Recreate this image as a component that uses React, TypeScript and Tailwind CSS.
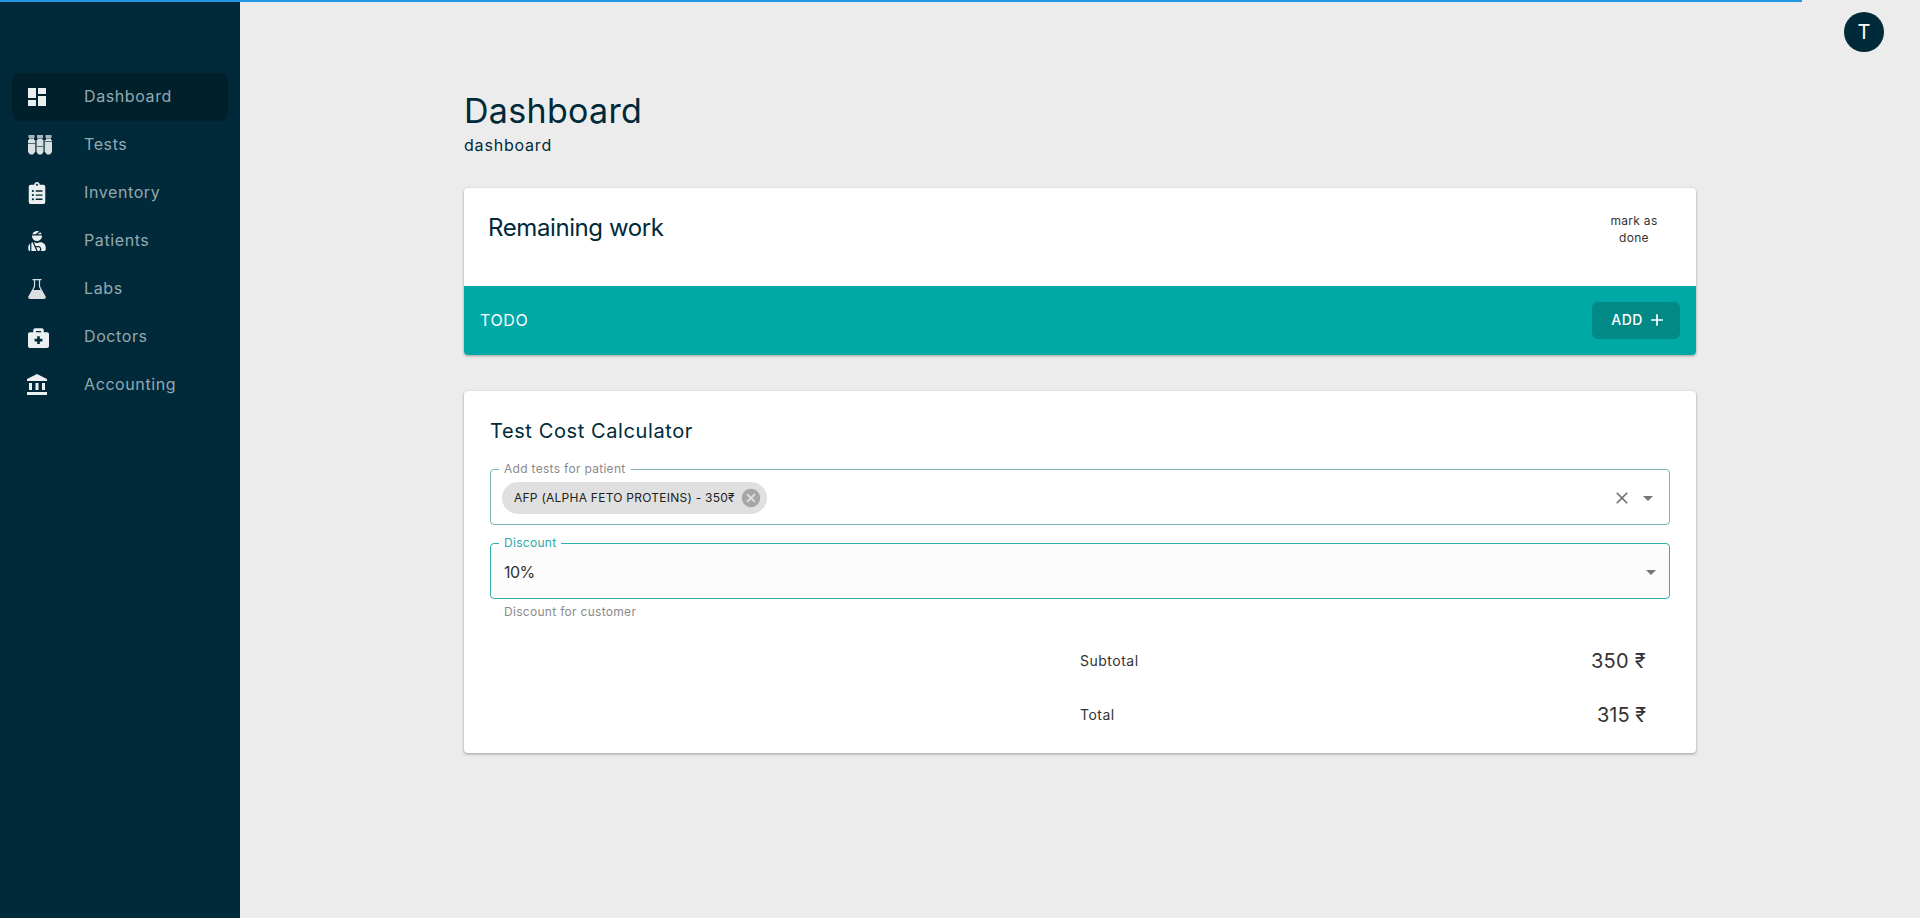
import { MdDashboard, MdAccountBalance, MdClose, MdAdd, MdCancel, MdArrowDropDown } from 'react-icons/md';
import { FaClipboardList, FaUserInjured, FaBriefcaseMedical } from 'react-icons/fa';

// no package has these two quite right
function TubesIcon() {
  return (
    <svg width="24" height="20" viewBox="0 0 24 20" fill="#d9dfe1">
      {[0, 8.5, 17].map((x, i) => (
        <g key={x} transform={`translate(${x} 0)`}>
          <rect x="0.5" y="0" width="6" height="3" fill="#a9b6bb" />
          <path d="M1 3.5h5v1.5h1v12l-2 2.5h-3l-2-2.5v-12h1z" />
          <rect x="0" y={[8, 11, 6][i]} width="7" height="1" fill="#4d6a75" />
        </g>
      ))}
      <rect x="7.2" y="5" width="1.2" height="12" fill="#4d6a75" />
      <rect x="15.7" y="5" width="1.2" height="12" fill="#4d6a75" />
    </svg>
  );
}

function FlaskIcon() {
  return (
    <svg width="18" height="20" viewBox="0 0 18 20">
      <path d="M4.5 0.7h9M6.5 1v6.5L1.2 17.5M11.5 1v6.5l5.3 10" fill="none" stroke="#d9dfe1" strokeWidth="1.2" />
      <path d="M4.6 11h8.8l4.2 6.6c.5 1.1-.2 2.4-1.5 2.4H1.900c-1.300 0-2-1.300-1.500-2.400z" fill="#d9dfe1" />
    </svg>
  );
}

const navItems = [
  { label: 'Dashboard', icon: <MdDashboard size={24} />, active: true },
  { label: 'Tests', icon: <span className="ml-[3px]"><TubesIcon /></span> },
  { label: 'Inventory', icon: <span className="ml-[1px]"><FaClipboardList size={22} /></span> },
  { label: 'Patients', icon: <span className="ml-[2px]"><FaUserInjured size={20} /></span> },
  { label: 'Labs', icon: <span className="ml-[3px]"><FlaskIcon /></span> },
  { label: 'Doctors', icon: <span className="ml-[3px]"><FaBriefcaseMedical size={21} /></span> },
  { label: 'Accounting', icon: <MdAccountBalance size={24} /> },
];

function Sidebar() {
  return (
    <aside className="h-[918px] w-[240px] shrink-0 bg-[#002a39] px-3 pt-[73px]">
      {navItems.map((item) => (
        <div
          key={item.label}
          className={`flex h-12 items-center rounded-lg ${item.active ? 'bg-[#00212b]' : ''}`}
        >
          <div className="flex w-[72px] justify-start pl-[13px] text-[#eceff0]">{item.icon}</div>
          <span className="pb-[2px] text-base tracking-[0.6px] text-[#93a9b0]">{item.label}</span>
        </div>
      ))}
    </aside>
  );
}

function Remaining() {
  return (
    <section className="mt-[31px] overflow-hidden rounded bg-white shadow-[0_1px_3px_rgba(0,0,0,0.35)]">
      <div className="flex h-[98px] justify-between pl-6 pr-[26px]">
        <h2 className="pt-[23px] text-2xl leading-[34px] tracking-[-0.4px] text-[#002a39]">Remaining work</h2>
        <div className="w-[72px] pt-6 text-center text-xs leading-[17px] tracking-[0.3px] text-[#333]">mark as done</div>
      </div>
      <div className="flex h-[69px] items-center justify-between bg-[#00a8a6] pl-4 pr-4 text-white">
        <span className="pb-[2px] text-base tracking-[0.6px]">TODO</span>
        <button className="flex h-[37px] w-[88px] items-center justify-center gap-1 rounded-md bg-[#008985] pb-[1px] pl-[6px] text-sm font-medium tracking-[0.4px]">
          ADD <MdAdd size={20} />
        </button>
      </div>
    </section>
  );
}

function Calculator() {
  return (
    <section className="mt-[36px] rounded bg-white px-[26px] pb-[24px] pt-[27px] shadow-[0_1px_3px_rgba(0,0,0,0.35)]">
      <h2 className="text-xl leading-[26px] tracking-[0.6px] text-[#002a39]">Test Cost Calculator</h2>

      <fieldset className="mt-[19px] flex h-[62px] items-center rounded border border-[#80b5b3] pb-[4px] pl-[11px] pr-[11px]">
        <legend className="ml-[-3px] px-[5px] text-xs leading-3 tracking-[0.3px] text-[#8a8a8a]">Add tests for patient</legend>
        <div className="flex h-8 items-center rounded-2xl bg-[#e0e0e0] pl-3 pr-[5px] text-xs tracking-[0.25px] text-[#222]">
          AFP (ALPHA FETO PROTEINS) - 350₹
          <MdCancel size={22} className="ml-[5px] text-[#a6a6a6]" />
        </div>
        <MdClose size={20} className="ml-auto mr-[1px] text-[#757575]" />
        <MdArrowDropDown size={24} className="ml-[3px] mr-[-2px] text-[#757575]" />
      </fieldset>

      <fieldset className="mt-[12px] flex h-[62px] items-center rounded border border-[#2fb0ae] bg-[#fcfcfc] pb-[4px] pl-[13px] pr-[6px]">
        <legend className="ml-[-5px] px-[5px] text-xs leading-3 tracking-[0.3px] text-[#2fa9a7]">Discount</legend>
        <span className="text-base tracking-[-0.5px] text-[#333]">10%</span>
        <MdArrowDropDown size={24} className="ml-auto text-[#757575]" />
      </fieldset>
      <p className="ml-[14px] mt-[4px] text-xs leading-[18px] tracking-[0.3px] text-[#8a8a8a]">Discount for customer</p>

      <div className="ml-[590px] mr-[24px] mt-[26px] flex items-center justify-between text-[#333]">
        <span className="text-sm tracking-[0.5px]">Subtotal</span>
        <span className="text-xl tracking-[0.3px]">350 ₹</span>
      </div>
      <div className="ml-[590px] mr-[24px] mt-[26px] flex items-center justify-between text-[#333]">
        <span className="text-sm tracking-[0.5px]">Total</span>
        <span className="text-xl">315 ₹</span>
      </div>
    </section>
  );
}

export default function App() {
  return (
    <div className="relative flex h-[918px] overflow-hidden bg-[#ececec] font-['Inter',sans-serif]">
      <div className="absolute left-0 top-0 h-[2px] w-[1802px] bg-[#2196e3]" />
      <Sidebar />
      <main className="flex-1">
        <header className="flex justify-end pr-9 pt-3">
          <div className="flex h-10 w-10 items-center justify-center rounded-full bg-[#002a39] text-xl text-white">T</div>
        </header>
        <div className="ml-[224px] w-[1232px]">
          <h1 className="mt-[38px] text-[34px] leading-[42px] tracking-[0.3px] text-[#002a39]">Dashboard</h1>
          <p className="mt-[1px] text-base leading-6 tracking-[0.8px] text-[#002a39]">dashboard</p>
          <Remaining />
          <Calculator />
        </div>
      </main>
    </div>
  );
}
